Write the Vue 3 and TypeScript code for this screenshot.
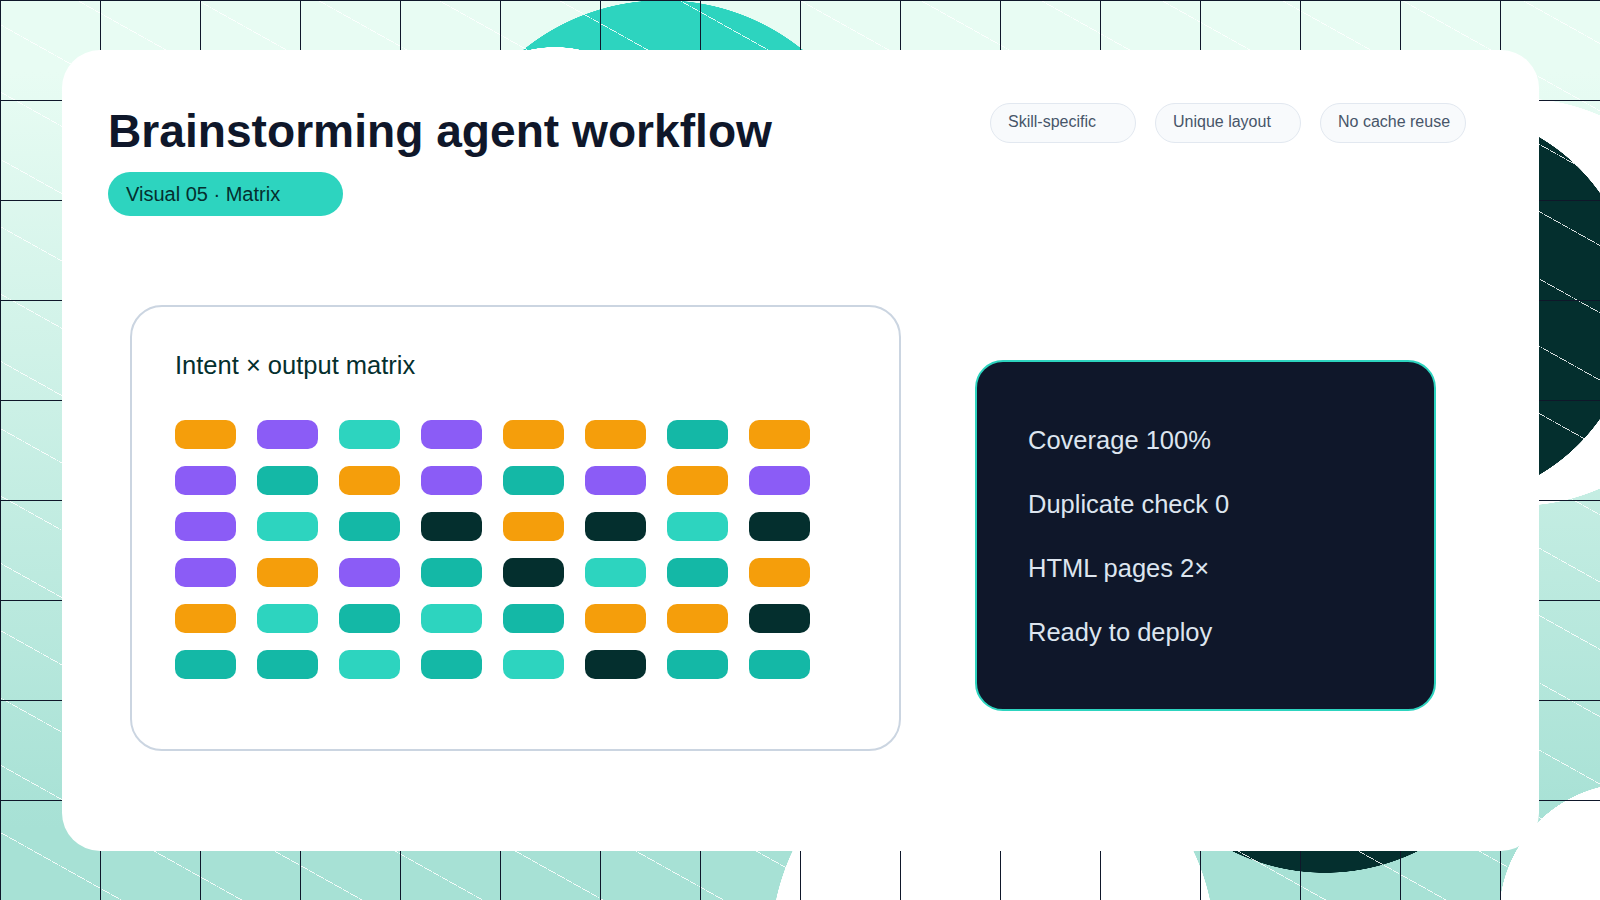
<script setup lang="ts">
type Tone = 'amber' | 'violet' | 'mint' | 'teal' | 'ink'

const a: Tone = 'amber'
const v: Tone = 'violet'
const m: Tone = 'mint'
const t: Tone = 'teal'
const k: Tone = 'ink'

const tags = ['Skill-specific', 'Unique layout', 'No cache reuse']

const cells: Tone[] = [
  a, v, m, v, a, a, t, a,
  v, t, a, v, t, v, a, v,
  v, m, t, k, a, k, m, k,
  v, a, v, t, k, m, t, a,
  a, m, t, m, t, a, a, k,
  t, t, m, t, m, k, t, t,
]

const stats = ['Coverage 100%', 'Duplicate check 0', 'HTML pages 2×', 'Ready to deploy']
</script>

<template>
  <div class="page">
    <main class="card">
      <header class="card__header">
        <div class="card__heading">
          <h1 class="card__title">Brainstorming agent workflow</h1>
          <span class="card__badge">Visual 05 · Matrix</span>
        </div>
        <ul class="tags">
          <li v-for="tag in tags" :key="tag" class="tags__item">{{ tag }}</li>
        </ul>
      </header>

      <div class="card__body">
        <!-- Matrix -->
        <section class="matrix">
          <h2 class="matrix__title">Intent × output matrix</h2>
          <div class="matrix__grid">
            <span
              v-for="(tone, i) in cells"
              :key="i"
              class="matrix__cell"
              :class="`matrix__cell--${tone}`"
            ></span>
          </div>
        </section>

        <!-- Stats -->
        <ul class="stats">
          <li v-for="stat in stats" :key="stat" class="stats__item">{{ stat }}</li>
        </ul>
      </div>
    </main>
  </div>
</template>

<style scoped>
.page {
  box-sizing: border-box;
  width: 1600px;
  height: 900px;
  padding: 50px 61px 49px 62px;
  overflow: hidden;
  font-family: "Liberation Sans", Arial, sans-serif;
  background-color: #e8fcf3;
  background-image:
    linear-gradient(#0f172a 1px, transparent 1px),
    linear-gradient(90deg, #0f172a 1px, transparent 1px),
    repeating-linear-gradient(29.2deg, rgba(255, 255, 255, 0.85) 0 0.75px, transparent 0.75px 58.76px),
    radial-gradient(circle 120px at 555px 167px, #fff 99.8%, transparent 100%),
    radial-gradient(circle 222px at 993px 946px, #fff 99.8%, transparent 100%),
    radial-gradient(circle 133px at 1632px 916px, #fff 99.8%, transparent 100%),
    radial-gradient(circle 210px at 1325px 663px, #042f2e 99.8%, transparent 100%),
    radial-gradient(circle 196px at 1440px 306px, #042f2e 99.8%, transparent 100%),
    radial-gradient(circle 204px at 1518px 302px, #fff 99.8%, transparent 100%),
    radial-gradient(circle 222px at 663px 222px, #2dd4bf 99.8%, transparent 100%),
    linear-gradient(180deg, #e8fcf3 8%, #a7e1d5 92%);
  background-size: 100px 100px, 100px 100px, auto, auto, auto, auto, auto, auto, auto, auto, auto;
}

.card {
  height: 100%;
  box-sizing: border-box;
  padding: 52px 73px 0 46px;
  background: #fff;
  border-radius: 38px;
}

.card__header {
  display: flex;
  justify-content: space-between;
  align-items: flex-start;
}

.card__title {
  margin: 3px 0 14px;
  font-size: 46.15px;
  line-height: 53px;
  font-weight: 700;
  color: #0f172a;
}

.card__badge {
  display: block;
  box-sizing: border-box;
  width: 235px;
  height: 44px;
  padding: 0 18px;
  border-radius: 22px;
  background: #2dd4bf;
  color: #042f2e;
  font-size: 20px;
  line-height: 44px;
}

.tags {
  display: flex;
  gap: 19px;
  margin: 1px 0 0;
  padding: 0;
  list-style: none;
}

.tags__item {
  box-sizing: border-box;
  width: 146px;
  height: 40px;
  padding: 0 17px;
  border: 1px solid #e2e8f0;
  border-radius: 20px;
  background: #f8fafc;
  color: #475569;
  font-size: 16px;
  line-height: 36px;
  white-space: nowrap;
}

.card__body {
  display: flex;
  align-items: flex-start;
  margin: 89px 0 0 22px;
}

.matrix {
  box-sizing: border-box;
  width: 771px;
  height: 446px;
  padding: 43px 43px;
  border: 2px solid #cbd5e1;
  border-radius: 32px;
}

.matrix__title {
  margin: 0 0 40px;
  font-size: 25.5px;
  line-height: 30px;
  font-weight: 400;
  color: #042f2e;
}

.matrix__grid {
  display: grid;
  grid-template-columns: repeat(8, 61px);
  grid-auto-rows: 29px;
  column-gap: 21px;
  row-gap: 17px;
}

.matrix__cell {
  border-radius: 10px;
}

.matrix__cell--amber { background: #f59e0b; }
.matrix__cell--violet { background: #8b5cf6; }
.matrix__cell--mint { background: #2dd4bf; }
.matrix__cell--teal { background: #14b8a6; }
.matrix__cell--ink { background: #042f2e; }

.stats {
  box-sizing: border-box;
  width: 461px;
  height: 351px;
  margin: 55px 0 0 74px;
  padding: 63px 51px 0;
  display: flex;
  flex-direction: column;
  gap: 34px;
  list-style: none;
  background: #0f172a;
  border: 2px solid #2dd4bf;
  border-radius: 28px;
}

.stats__item {
  font-size: 25.5px;
  line-height: 30px;
  color: #dde5ef;
}
</style>

<style>
body {
  margin: 0;
}
</style>
